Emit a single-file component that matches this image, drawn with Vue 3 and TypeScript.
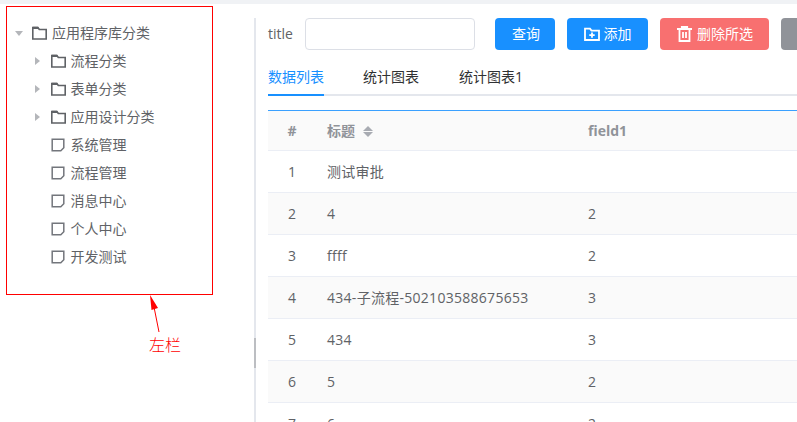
<script setup lang="ts">
interface TreeNode { label: string; level: number; kind: 'open' | 'closed' | 'leaf' }
const nodes: TreeNode[] = [
  { label: '应用程序库分类', level: 0, kind: 'open' },
  { label: '流程分类', level: 1, kind: 'closed' },
  { label: '表单分类', level: 1, kind: 'closed' },
  { label: '应用设计分类', level: 1, kind: 'closed' },
  { label: '系统管理', level: 1, kind: 'leaf' },
  { label: '流程管理', level: 1, kind: 'leaf' },
  { label: '消息中心', level: 1, kind: 'leaf' },
  { label: '个人中心', level: 1, kind: 'leaf' },
  { label: '开发测试', level: 1, kind: 'leaf' },
]
const rows = [
  { no: 1, title: '测试审批', field: '' },
  { no: 2, title: '4', field: '2' },
  { no: 3, title: 'ffff', field: '2' },
  { no: 4, title: '434-子流程-502103588675653', field: '3' },
  { no: 5, title: '434', field: '3' },
  { no: 6, title: '5', field: '2' },
  { no: 7, title: '6', field: '2' },
]
</script>

<template>
  <div class="page">
    <div class="topstrip"></div>
    <div class="body">
      <aside class="aside">
        <ul class="tree">
          <li v-for="n in nodes" :key="n.label" class="node" :class="'lv' + n.level">
            <span class="caret" :class="n.kind"></span>
            <svg v-if="n.kind !== 'leaf'" class="ico" viewBox="0 0 15 14" width="15" height="14">
              <path d="M.8 13V1.5h5l1.5 2h6.900V13Z" fill="none" stroke="#5f6266" stroke-width="1.600" />
              <path d="M.8 .8h5.400l1.300 2.200H.8Z" fill="#5f6266" />
            </svg>
            <svg v-else class="ico leaf" viewBox="0 0 14 14" width="14" height="14">
              <path d="M1.200 1.200h11.600v8.600l-3 3H1.200Z" fill="none" stroke="#73767c" stroke-width="1.500" />
            </svg>
            <span>{{ n.label }}</span>
          </li>
        </ul>
      </aside>
      <div class="splitter"><span class="handle"></span></div>
      <main class="main">
        <div class="toolbar">
          <label class="lbl">title</label>
          <input class="input" type="text" />
          <button class="btn primary first">查询</button>
          <button class="btn primary">
            <svg viewBox="0 0 16 14" width="16" height="14">
              <path d="M1 13V1.600h5l1.500 2H15V13Z" fill="none" stroke="#fff" stroke-width="1.800" />
              <path d="M8 5.400v5.400M5.300 8.100h5.400" stroke="#fff" stroke-width="1.800" />
            </svg>
            添加
          </button>
          <button class="btn danger">
            <svg viewBox="0 0 15 16" width="15" height="16">
              <path d="M0 3h15M4.800 3V1h5.400v2M2.500 3.600V15h10V3.600M6 6v6M9 6v6" fill="none" stroke="#fff" stroke-width="1.800" />
            </svg>
            删除所选
          </button>
          <button class="btn gray"></button>
        </div>
        <div class="tabs">
          <span class="tab active">数据列表</span>
          <span class="tab">统计图表</span>
          <span class="tab">统计图表1</span>
        </div>
        <div class="table">
          <div class="row head">
            <div class="c0">#</div>
            <div class="c1">标题<span class="sort"><i class="up"></i><i class="down"></i></span></div>
            <div class="c2">field1</div>
          </div>
          <div v-for="r in rows" :key="r.no" class="row" :class="{ stripe: r.no % 2 === 0 }">
            <div class="c0">{{ r.no }}</div>
            <div class="c1 cell">{{ r.title }}</div>
            <div class="c2">{{ r.field }}</div>
          </div>
        </div>
      </main>
    </div>
    <div class="note-box"></div>
    <svg class="note-arrow" viewBox="0 0 20 40" width="20" height="40">
      <path d="M12 37 7 12" stroke="#f00" stroke-width="1" fill="none" />
      <path d="M4.500 15 3 0 11 13Z" fill="#f00" />
    </svg>
    <span class="note-text">左栏</span>
  </div>
</template>

<style>
html, body { margin: 0; overflow: hidden; background: #fff; }
</style>

<style scoped>
.page {
  position: relative;
  width: 797px;
  height: 422px;
  overflow: hidden;
  font: 14px/1.4 "Open Sans", "Noto Sans CJK SC", sans-serif;
  color: #606266;
}
.topstrip { height: 4px; background: #f0f2f5; }
.body { display: flex; height: 418px; padding-top: 14px; box-sizing: border-box; }
.aside { width: 254px; flex: none; box-sizing: border-box; }
.tree { list-style: none; margin: 0; padding: 1px 0 0; }
.node { display: flex; align-items: center; height: 28px; white-space: nowrap; }
.lv0 { padding-left: 15px; }
.lv1 { padding-left: 33px; }
.caret { width: 10px; height: 10px; flex: none; position: relative; margin-right: 7px; }
.lv1 .caret { margin-right: 7.500px; }
.caret.open::after {
  content: ""; position: absolute; left: 0; top: 3px;
  border: 4px solid transparent; border-top: 5px solid #b4b6ba; border-bottom: 0;
}
.caret.closed::after {
  content: ""; position: absolute; left: 2px; top: 1px;
  border: 4px solid transparent; border-left: 5px solid #b4b6ba; border-right: 0;
}
.ico { flex: none; margin-right: 5px; }
.ico.leaf { margin-right: 6px; }
.splitter {
  width: 2px; flex: none; background: #e4e7ed; position: relative;
}
.handle { position: absolute; left: 0; top: 320px; width: 2px; height: 30px; background: #bcbec2; }
.main { flex: 1; min-width: 0; padding-left: 12px; }
.toolbar { display: flex; align-items: center; height: 32px; }
.lbl { width: 37px; flex: none; }
.input {
  width: 170px; height: 32px; box-sizing: border-box; flex: none;
  border: 1px solid #dcdfe6; border-radius: 4px; outline: none; background: #fff;
}
.btn {
  flex: none; height: 32px; border: 0; border-radius: 4px; color: #fff;
  font: inherit; display: inline-flex; align-items: center; justify-content: center;
  gap: 4px; margin-left: 12px; padding: 0;
}
.btn.first { margin-left: 20px; width: 60px; padding-left: 2px; }
.primary { background: #1890ff; width: 81px; }
.danger { background: #f87070; width: 109px; gap: 5px; padding-left: 1px; }
.gray { background: #909399; width: 80px; }
.tabs {
  display: flex; margin-top: 17px; height: 29px; box-sizing: border-box;
  border-bottom: 2px solid #e4e7ed; color: #303133;
  line-height: 20px;
}
.tab { padding: 0 20px; height: 29px; box-sizing: border-box; }
.tab:first-child { padding-left: 0; }
.tab.active { color: #1890ff; border-bottom: 2px solid #1890ff; padding-right: 0; margin-right: 19px; }
.table { margin-top: 14px; border-top: 1px solid #3aa0ff; }
.row {
  display: grid; grid-template-columns: 59px 261px 1fr; height: 42px; box-sizing: border-box;
  align-items: center; border-bottom: 1px solid #ebeef5; white-space: nowrap;
}
.row.stripe { background: #fafafa; }
.row.head { height: 40px; background: #fafafa; color: #909399; font-weight: 700; }
.c0 { text-align: center; padding-right: 11px; }
.cell { letter-spacing: .28px; }
.sort { display: inline-block; position: relative; width: 10px; height: 11px; margin-left: 8px; vertical-align: -1px; }
.sort i { position: absolute; left: 0; border: 5px solid transparent; }
.sort .up { top: 0; border-bottom-color: #a8abb2; border-top: 0; }
.sort .down { bottom: 0; border-top-color: #a8abb2; border-bottom: 0; }
.note-box {
  position: absolute; left: 6px; top: 6px; width: 207px; height: 289px;
  box-sizing: border-box; border: 1px solid #f00; pointer-events: none;
}
.note-arrow { position: absolute; left: 147px; top: 295px; }
.note-text {
  position: absolute; left: 149px; top: 334px; color: #f00; font-size: 16px; line-height: 22px; font-weight: 300;
}
</style>
